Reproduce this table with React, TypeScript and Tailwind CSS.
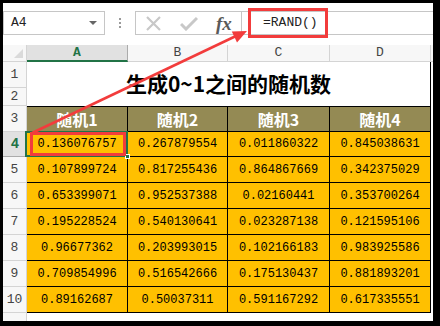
import React from 'react';

const cols = ['A', 'B', 'C', 'D'];
const heads = ['随机1', '随机2', '随机3', '随机4'];
const rows = [
  ['0.136076757', '0.267879554', '0.011860322', '0.845038631'],
  ['0.107899724', '0.817255436', '0.864867669', '0.342375029'],
  ['0.653399071', '0.952537388', '0.02160441', '0.353700264'],
  ['0.195228524', '0.540130641', '0.023287138', '0.121595106'],
  ['0.96677362', '0.203993015', '0.102166183', '0.983925586'],
  ['0.709854996', '0.516542666', '0.175130437', '0.881893201'],
  ['0.89162687', '0.50037311', '0.591167292', '0.617335551'],
];

const mono = { fontFamily: '"Liberation Mono", "Noto Sans CJK SC", monospace' };
const cjk = { fontFamily: '"Noto Sans CJK SC", "Noto Sans", sans-serif' };

const App: React.FC = () => {
  return (
    <div className="relative w-[440px] h-[326px] bg-black pt-[3px] pl-[3px] pr-[7px] pb-[5px] overflow-hidden">
      <div className="relative w-full h-full bg-white flex flex-col" style={mono}>
        {/* Formula bar */}
        <div className="h-[42px] shrink-0 pt-[8px] flex items-start">
          <div className="w-[102px] h-[24px] border border-[#c6c6c6] flex items-center justify-between pl-[7px] pr-[7px] text-[13px] text-[#222]">
            <span>A4</span>
            <span className="w-0 h-0 border-l-[4px] border-r-[4px] border-t-[4px] border-l-transparent border-r-transparent border-t-[#666]" />
          </div>
          <div className="w-[30px] h-[24px] flex flex-col items-center justify-center gap-[2px]">
            <span className="w-[2px] h-[2px] bg-[#9a9a9a]" />
            <span className="w-[2px] h-[2px] bg-[#9a9a9a]" />
            <span className="w-[2px] h-[2px] bg-[#9a9a9a]" />
          </div>
          <div className="w-[107px] h-[24px] border border-[#c6c6c6] flex items-center pl-[9px] gap-[18px]">
            <svg width="17" height="15" viewBox="0 0 17 15">
              <path d="M2 1 L15 14 M15 1 L2 14" stroke="#c8c8c8" strokeWidth="2.2" fill="none" />
            </svg>
            <svg width="18" height="15" viewBox="0 0 18 15">
              <path d="M1 8 L6 13 L17 2" stroke="#c8c8c8" strokeWidth="3" fill="none" />
            </svg>
            <span className="text-[19px] italic font-bold text-[#5a5a5a] leading-none" style={{ fontFamily: '"Liberation Serif", serif' }}>fx</span>
          </div>
          <div className="flex-1 h-[24px] border-t border-b border-[#c6c6c6] flex items-center pl-[21px] text-[13px] text-[#222]">
            =RAND()
          </div>
        </div>

        {/* Sheet */}
        <div className="flex-1 grid grid-cols-[24px_101px_100px_102px_101px_1fr] grid-rows-[17px_26px_18px_26px_25px_26px_26px_26px_26px_26px_26px_1fr]">
          <div className="bg-[#f7f7f7] border-r border-b border-[#d4d4d4] flex items-end justify-end pr-[3px] pb-[3px]">
            <span className="w-0 h-0 border-l-[10px] border-t-[10px] border-l-transparent border-t-transparent border-b-0 border-r-[0px]" style={{ borderBottom: '9px solid #dadada', borderLeft: '9px solid transparent', borderTop: 0 }} />
          </div>
          {cols.map((c, i) => (
            <div
              key={c}
              className={
                i === 0
                  ? 'bg-[#e1e1e1] border-r border-[#ababab] border-b-2 border-b-[#217346] text-[#217346] font-bold flex items-center justify-center text-[13px]'
                  : 'bg-[#f7f7f7] border-r border-b border-[#d4d4d4] text-[#444] flex items-center justify-center text-[13px]'
              }
            >
              {c}
            </div>
          ))}
          <div className="bg-[#f7f7f7] border-b border-[#d4d4d4]" />

          {/* row 1 + title */}
          <div className="bg-[#f7f7f7] border-r border-b border-[#d4d4d4] flex items-center justify-center text-[13px] text-[#444]">1</div>
          <div className="col-span-4 row-span-2 border-r border-black flex items-center justify-center text-[21px] font-bold text-black" style={cjk}>
            生成0~1之间的随机数
          </div>
          <div className="row-span-2" />
          <div className="bg-[#f7f7f7] border-r border-b border-[#d4d4d4] flex items-center justify-center text-[13px] text-[#444]">2</div>

          {/* row 3 header */}
          <div className="bg-[#f7f7f7] border-r border-b border-[#d4d4d4] flex items-center justify-center text-[13px] text-[#444]">3</div>
          {heads.map((h) => (
            <div key={h} className="bg-[#948a54] border-t border-r border-b border-black flex items-center justify-center text-white font-bold text-[16px]" style={cjk}>
              {h}
            </div>
          ))}
          <div />

          {rows.map((r, ri) => (
            <React.Fragment key={ri}>
              <div
                className={
                  ri === 0
                    ? 'bg-[#e1e1e1] border-b border-[#ababab] flex items-center justify-center text-[14px] font-bold text-[#217346]'
                    : 'bg-[#f7f7f7] border-r border-b border-[#d4d4d4] flex items-center justify-center text-[13px] text-[#444]'
                }
              >
                {ri + 4}
              </div>
              {r.map((v, ci) => (
                <div key={ci} className="bg-[#ffc000] border-r border-b border-black flex items-center justify-center text-[12px] text-black">
                  {v}
                </div>
              ))}
              <div />
            </React.Fragment>
          ))}
          <div className="bg-[#f7f7f7] border-r border-[#d4d4d4]" />
          <div className="col-span-5" />
        </div>

        {/* selection of A4 */}
        <div className="absolute left-[22px] top-[128px] w-[103px] h-[26px] border-2 border-[#217346]" />
        <div className="absolute left-[122px] top-[151px] w-[5px] h-[5px] bg-[#217346] border border-white" />

        {/* annotations */}
        <div className="absolute left-[27px] top-[129px] w-[96px] h-[24px] border-[3px] border-[#f23c3c]" />
        <div className="absolute left-[245px] top-[5px] w-[80px] h-[30px] border-[3px] border-[#f23c3c]" />
      </div>

      <svg className="absolute inset-0 pointer-events-none" width="440" height="326" viewBox="0 0 440 326">
        <line x1="32" y1="133" x2="236" y2="36" stroke="#f23c3c" strokeWidth="2.5" />
        <polygon points="247,31 237,42.4 231.8,31.6" fill="#f23c3c" />
      </svg>
    </div>
  );
};

export default App;
